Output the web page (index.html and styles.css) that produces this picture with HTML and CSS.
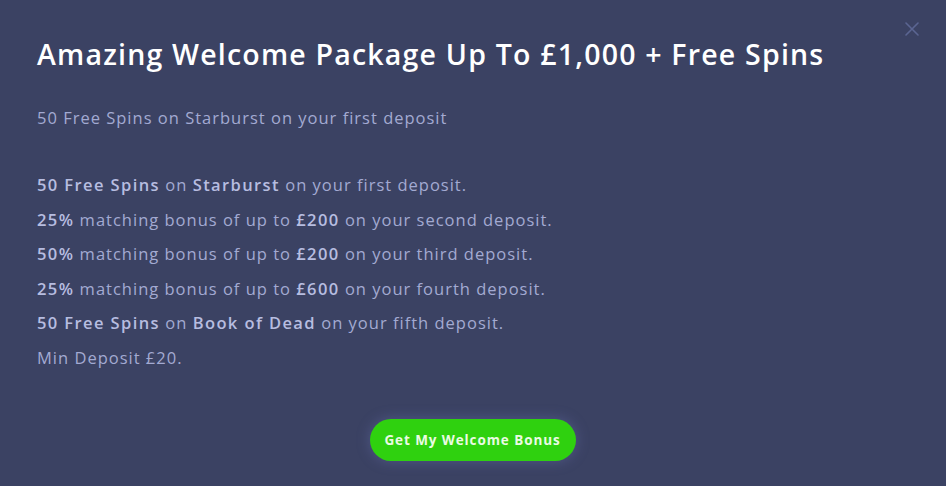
FILE: index.html
```html
<!DOCTYPE html>
<html lang="en">
<head>
<meta charset="utf-8">
<title>Welcome Package</title>
<link rel="stylesheet" href="styles.css">
</head>
<body>
<div class="modal">
  <button class="close" aria-label="Close">
    <svg width="14" height="14" viewBox="0 0 14 14"><path d="M1 1L13 13M13 1L1 13" stroke="currentColor" stroke-width="1.6" stroke-linecap="round"/></svg>
  </button>
  <h1 class="title">Amazing Welcome Package Up To £1,000 + Free Spins</h1>
  <p class="subtitle">50 Free Spins on Starburst on your first deposit</p>
  <ul class="terms">
    <li><b>50 Free Spins</b> on <b>Starburst</b> on your first deposit.</li>
    <li><b>25%</b> matching bonus of up to <b>£200</b> on your second deposit.</li>
    <li><b>50%</b> matching bonus of up to <b>£200</b> on your third deposit.</li>
    <li><b>25%</b> matching bonus of up to <b>£600</b> on your fourth deposit.</li>
    <li><b>50 Free Spins</b> on <b>Book of Dead</b> on your fifth deposit.</li>
    <li>Min Deposit £20.</li>
  </ul>
  <div class="actions">
    <button class="cta">Get My Welcome Bonus</button>
  </div>
</div>
</body>
</html>
```
FILE: styles.css
```css
html, body {
  margin: 0;
  padding: 0;
  background: #3b4263;
}
body {
  width: 946px;
  height: 486px;
  overflow: hidden;
  font-family: "Open Sans", "Liberation Sans", sans-serif;
}
.modal {
  position: relative;
  box-sizing: border-box;
  height: 486px;
  padding: 34px 38px 0 37px;
  display: flex;
  flex-direction: column;
}
.close {
  position: absolute;
  top: 22px;
  right: 27px;
  background: none;
  border: 0;
  padding: 0;
  color: #5b6592;
  display: flex;
}
.title {
  margin: 0;
  font-size: 28.5px;
  line-height: 40px;
  font-weight: 600;
  color: #ffffff;
  letter-spacing: 1.2px;
  white-space: nowrap;
}
.subtitle {
  margin: 30px 0 0 0;
  font-size: 16.5px;
  line-height: 28px;
  color: #a3aad2;
  letter-spacing: 1px;
}
.terms {
  list-style: none;
  margin: 36px 0 0 0;
  padding: 0;
  font-size: 16.5px;
  line-height: 34.5px;
  color: #a3aad2;
  letter-spacing: 1px;
}
.terms b {
  font-weight: 600;
  color: #b7bde0;
  letter-spacing: 1.4px;
}
.actions {
  margin-top: 44px;
  display: flex;
  justify-content: center;
}
.cta {
  width: 206px;
  height: 42px;
  border: 0;
  border-radius: 21px;
  background: #2fd10f;
  color: #eafbe4;
  font-family: "Open Sans", "Liberation Sans", sans-serif;
  font-weight: 700;
  font-size: 13.5px;
  letter-spacing: 0.9px;
  box-shadow: 0 0 14px rgba(120, 130, 200, 0.35);
  cursor: pointer;
}
```
